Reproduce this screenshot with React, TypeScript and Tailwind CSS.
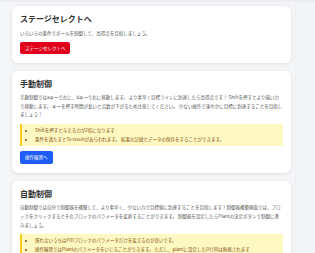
import React from "react";

const font = { fontFamily: '"Noto Sans CJK JP", "Noto Sans", sans-serif' };

function Card({ children }: { children: React.ReactNode }) {
  return (
    <div className="bg-white rounded-[6px] shadow-[0_1px_4px_rgba(0,0,0,0.10)] pt-[8px] px-[8px] pb-[9px] flex flex-col items-start">
      {children}
    </div>
  );
}

function Title({ children }: { children: React.ReactNode }) {
  return <div className="text-[8px] leading-[10px] font-bold text-[#333]">{children}</div>;
}

function Para({ children }: { children: React.ReactNode }) {
  return <p className="mt-[4px] text-[4.5px] leading-[8.7px] text-[#555]">{children}</p>;
}

function Note({ items }: { items: string[] }) {
  return (
    <div className="mt-[5px] w-full bg-[#fef9c3] border-l-[2px] border-[#facc15] py-[2px] pl-[7px] pr-[4px]">
      <ul className="list-disc pl-[6px] flex flex-col">
        {items.map((t) => (
          <li key={t} className="text-[4.5px] leading-[9px] text-[#854d0e]">
            {t}
          </li>
        ))}
      </ul>
    </div>
  );
}

export default function App() {
  return (
    <div className="min-h-screen bg-[#f5f6f8] flex border-t-[2px] border-[#eceef1]" style={font}>
      <div className="w-[295px] pl-[12px] pr-[4px] pt-[4px] pb-[8px] flex flex-col gap-[8px]">
        <Card>
          <Title>ステージセレクトへ</Title>
          <p className="mt-[5px] text-[4.5px] leading-[8px] text-[#555]">
            いろいろの条件でボールを制御して、高得点を目指しましょう。
          </p>
          <button className="mt-[5px] h-[12px] px-[5px] bg-[#e0001b] text-white text-[4.5px] rounded-[2px]">
            ステージセレクトへ
          </button>
        </Card>
        <Card>
          <Title>手動制御</Title>
          <Para>
            手動制御ではaキーで左に、dキーで右に移動します。 より素早く目標ラインに到達したら高得点です！ Shiftを押すとより強い力で移動します。 キーを押す時間が長いと点数が下がるため注意してください。 少ない操作で速やかに目標に到達することを目指しましょう！
          </Para>
          <Note
            items={[
              "Shiftを押すと与える力が2倍になります",
              "条件を満たすとTo resultがあらわれます。 結果の記録とデータの保存をすることができます。",
            ]}
          />
          <button className="mt-[5px] h-[13px] px-[5px] bg-[#1d5cf5] text-white text-[4.5px] rounded-[2px]">
            操作練習へ
          </button>
        </Card>
        <Card>
          <Title>自動制御</Title>
          <Para>
            自動制御では自分で制御器を構築して、より素早く、少ない力で目標値に到達することを目指します！制御器構築画面では、ブロックをクリックするとそのブロックのパラメータを変更することができます。 制御器を設定したらPlantの決定ボタンで制御に進みましょう。
          </Para>
          <Note
            items={[
              "慣れないうちはPIDブロックのパラメータだけを変えるのが良いです。",
              "操作練習ではPlantのパラメータをいじることができます。 ただし、plantに設定したD行列は無視されます",
            ]}
          />
        </Card>
      </div>
      <div className="flex-1 bg-[#f3f5f8] border-l border-[#eef0f3]" />
    </div>
  );
}
